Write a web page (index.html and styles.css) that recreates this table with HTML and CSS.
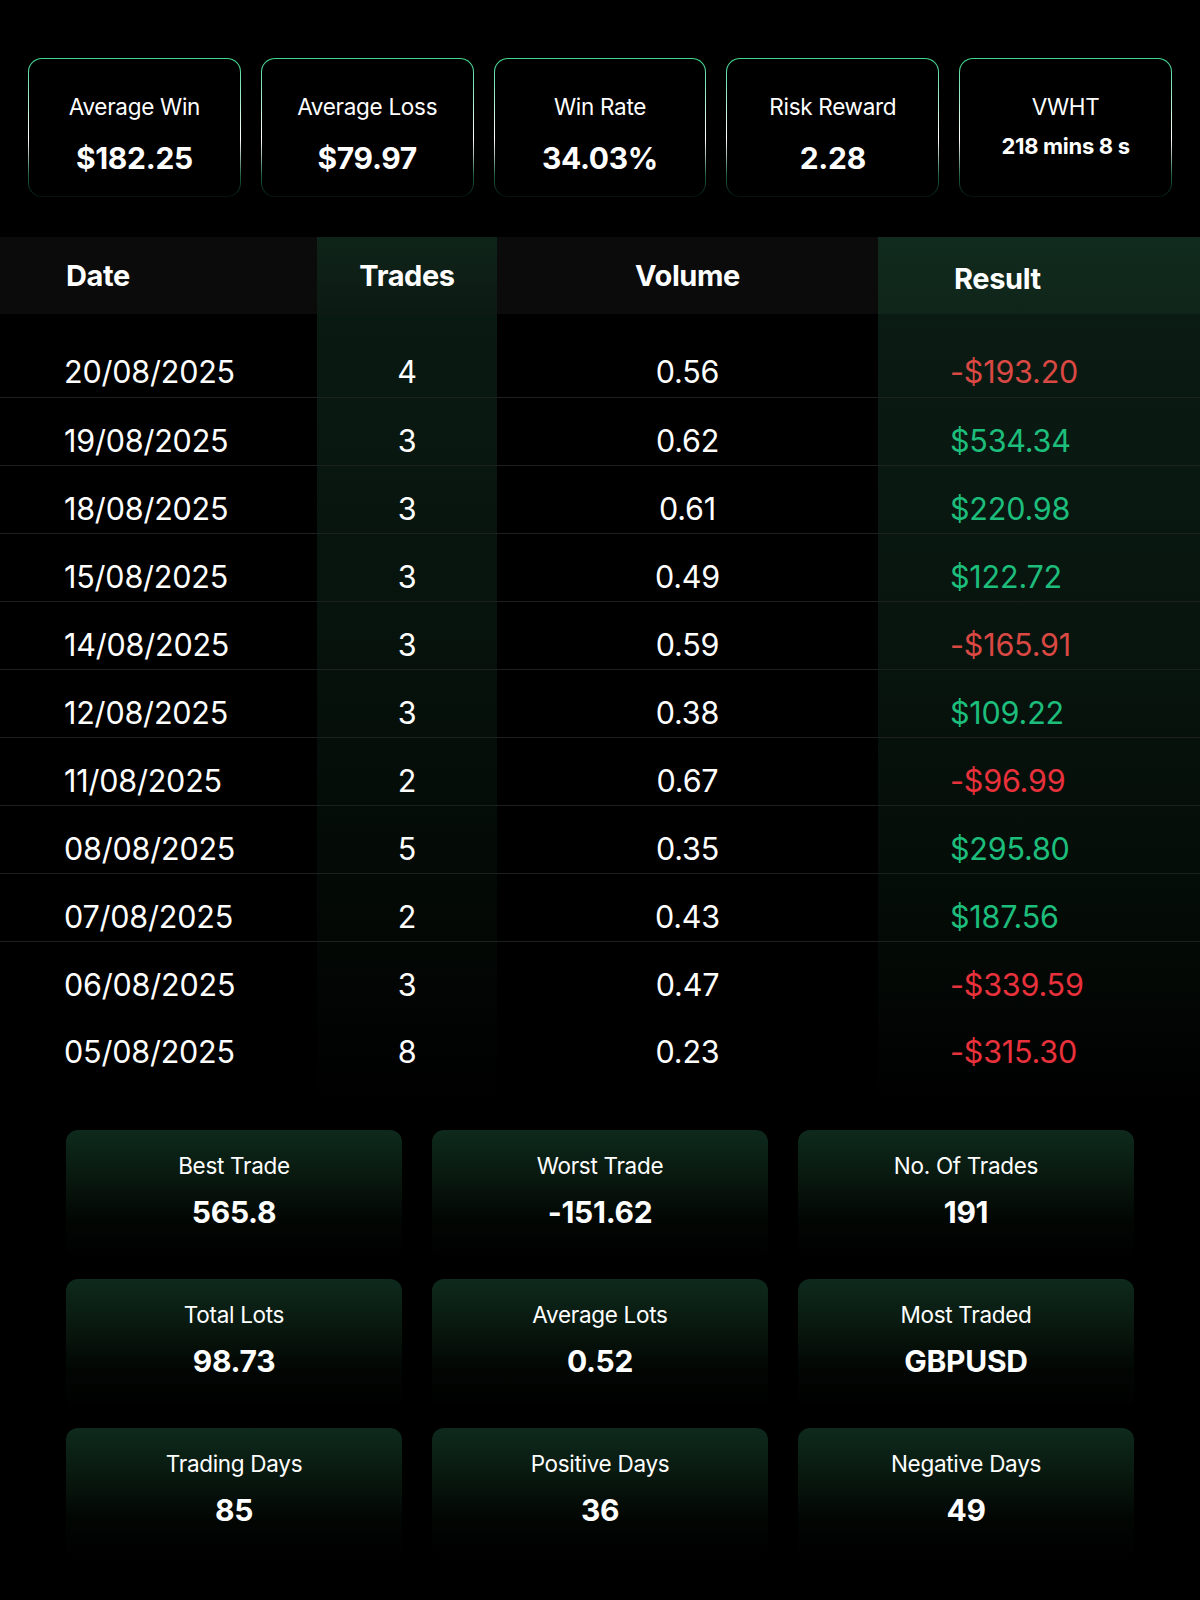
FILE: index.html
```html
<!DOCTYPE html>
<html lang="en">

<head>
    <meta charset="UTF-8">
    <meta name="viewport" content="width=device-width, initial-scale=1.0">
    <title>Trading Summary</title>

    <link rel="stylesheet" href="styles.css">
</head>

<body>

    <div class="summary">
        <div class="summary-card">
            <p class="label">Average Win</p>
            <p class="value">$182.25</p>
        </div>
        <div class="summary-card">
            <p class="label">Average Loss</p>
            <p class="value">$79.97</p>
        </div>
        <div class="summary-card">
            <p class="label">Win Rate</p>
            <p class="value">34.03%</p>
        </div>
        <div class="summary-card">
            <p class="label">Risk Reward</p>
            <p class="value">2.28</p>
        </div>
        <div class="summary-card">
            <p class="label">VWHT</p>
            <p class="value small">218 mins 8 s</p>
        </div>
    </div>

    <table class="days">
        <colgroup>
            <col class="col-date">
            <col class="col-trades">
            <col class="col-volume">
            <col class="col-result">
        </colgroup>
        <thead>
            <tr>
                <th class="date">Date</th>
                <th class="trades">Trades</th>
                <th class="volume">Volume</th>
                <th class="result">Result</th>
            </tr>
        </thead>
        <tbody>
            <tr class="first">
                <td class="date">20/08/2025</td>
                <td class="trades">4</td>
                <td class="volume">0.56</td>
                <td class="result loss dim">-$193.20</td>
            </tr>
            <tr>
                <td class="date">19/08/2025</td>
                <td class="trades">3</td>
                <td class="volume">0.62</td>
                <td class="result win">$534.34</td>
            </tr>
            <tr>
                <td class="date">18/08/2025</td>
                <td class="trades">3</td>
                <td class="volume">0.61</td>
                <td class="result win">$220.98</td>
            </tr>
            <tr>
                <td class="date">15/08/2025</td>
                <td class="trades">3</td>
                <td class="volume">0.49</td>
                <td class="result win">$122.72</td>
            </tr>
            <tr>
                <td class="date">14/08/2025</td>
                <td class="trades">3</td>
                <td class="volume">0.59</td>
                <td class="result loss dim">-$165.91</td>
            </tr>
            <tr>
                <td class="date">12/08/2025</td>
                <td class="trades">3</td>
                <td class="volume">0.38</td>
                <td class="result win">$109.22</td>
            </tr>
            <tr>
                <td class="date">11/08/2025</td>
                <td class="trades">2</td>
                <td class="volume">0.67</td>
                <td class="result loss">-$96.99</td>
            </tr>
            <tr>
                <td class="date">08/08/2025</td>
                <td class="trades">5</td>
                <td class="volume">0.35</td>
                <td class="result win">$295.80</td>
            </tr>
            <tr>
                <td class="date">07/08/2025</td>
                <td class="trades">2</td>
                <td class="volume">0.43</td>
                <td class="result win">$187.56</td>
            </tr>
            <tr class="no-line">
                <td class="date">06/08/2025</td>
                <td class="trades">3</td>
                <td class="volume">0.47</td>
                <td class="result loss">-$339.59</td>
            </tr>
            <tr class="no-line last">
                <td class="date">05/08/2025</td>
                <td class="trades">8</td>
                <td class="volume">0.23</td>
                <td class="result loss">-$315.30</td>
            </tr>
        </tbody>
    </table>

    <div class="stats">
        <div class="stat-card">
            <p class="label">Best Trade</p>
            <p class="value">565.8</p>
        </div>
        <div class="stat-card">
            <p class="label">Worst Trade</p>
            <p class="value">-151.62</p>
        </div>
        <div class="stat-card">
            <p class="label">No. Of Trades</p>
            <p class="value">191</p>
        </div>
        <div class="stat-card">
            <p class="label">Total Lots</p>
            <p class="value">98.73</p>
        </div>
        <div class="stat-card">
            <p class="label">Average Lots</p>
            <p class="value">0.52</p>
        </div>
        <div class="stat-card">
            <p class="label">Most Traded</p>
            <p class="value">GBPUSD</p>
        </div>
        <div class="stat-card">
            <p class="label">Trading Days</p>
            <p class="value">85</p>
        </div>
        <div class="stat-card">
            <p class="label">Positive Days</p>
            <p class="value">36</p>
        </div>
        <div class="stat-card">
            <p class="label">Negative Days</p>
            <p class="value">49</p>
        </div>
    </div>

</body>

</html>
```

FILE: styles.css
```css
* {
    box-sizing: border-box;
}

html,
body {
    background-color: #000;
    margin: 0;
    padding: 0;
    color: #fff;
    font-family: Inter, 'Noto Sans', sans-serif;
}

p {
    margin: 0;
    padding: 0;
    text-align: center;
}

.label {
    font-size: 22.5px;
    line-height: 28px;
    font-weight: 400;
    letter-spacing: -0.3px;
}

.value {
    font-size: 30px;
    line-height: 36px;
    font-weight: 700;
    letter-spacing: -0.3px;
}

/* top summary cards */
.summary {
    display: grid;
    grid-template-columns: repeat(5, 1fr);
    gap: 20px;
    padding: 58px 28px 0;
}

.summary-card {
    height: 139px;
    padding-top: 34px;
    border: 1px solid transparent;
    border-radius: 14px;
    background:
        linear-gradient(#000, #000) padding-box,
        linear-gradient(180deg, #3bd690 0%, #c8f5dc 40%, #ffffff 58%, #1d5c3e 85%, #03140c 100%) border-box;
}

.summary-card .value {
    margin-top: 19px;
}

.summary-card .value.small {
    margin-top: 11px;
    font-size: 22px;
    line-height: 28px;
}

/* daily table */
.days {
    width: 100%;
    margin-top: 40px;
    border-collapse: collapse;
    table-layout: fixed;
}

.col-date {
    width: 317px;
}

.col-trades {
    width: 180px;
    background: linear-gradient(180deg, #0a1c13 0%, #07130d 45%, #030805 80%, #000 100%);
}

.col-volume {
    width: 381px;
}

.col-result {
    background: linear-gradient(180deg, #0b1d14 0%, #08150f 45%, #040b07 80%, #000 100%);
}

th {
    height: 77px;
    padding: 0;
    font-size: 29px;
    font-weight: 700;
    letter-spacing: -0.4px;
    background-color: #0b0b0b;
}

th.trades {
    background: linear-gradient(180deg, #0f2419, #0c1a13);
}

th.result {
    background: linear-gradient(180deg, #112b1f, #102519);
    padding-top: 6px;
}

td {
    height: 68px;
    padding: 25px 0 0;
    font-size: 30.5px;
    line-height: 36px;
    font-weight: 400;
    letter-spacing: -0.2px;
    border-bottom: 1px solid #1c201e;
    vertical-align: top;
}

tr.first td {
    height: 83px;
    padding-top: 40px;
}

tr.last td {
    height: 90px;
}

tr.no-line td {
    border-bottom: none;
}

.date {
    text-align: left;
    padding-left: 64px;
}

th.date {
    padding-left: 66px;
}

.trades,
.volume {
    text-align: center;
}

.result {
    text-align: left;
    padding-left: 72px;
}

th.result {
    padding-left: 76px;
}

.win {
    color: #1dbd7c;
}

.loss {
    color: #e8313b;
}

.loss.dim {
    color: #d94843;
}

/* bottom stat cards */
.stats {
    display: grid;
    grid-template-columns: repeat(3, 1fr);
    column-gap: 30px;
    row-gap: 19px;
    padding: 31px 66px 0;
}

.stat-card {
    height: 130px;
    padding-top: 22px;
    border-radius: 12px;
    background: linear-gradient(180deg, #0e2a1d 0%, #09190f 35%, #020603 70%, #000 100%);
}

.stat-card .value {
    margin-top: 14px;
}
```
